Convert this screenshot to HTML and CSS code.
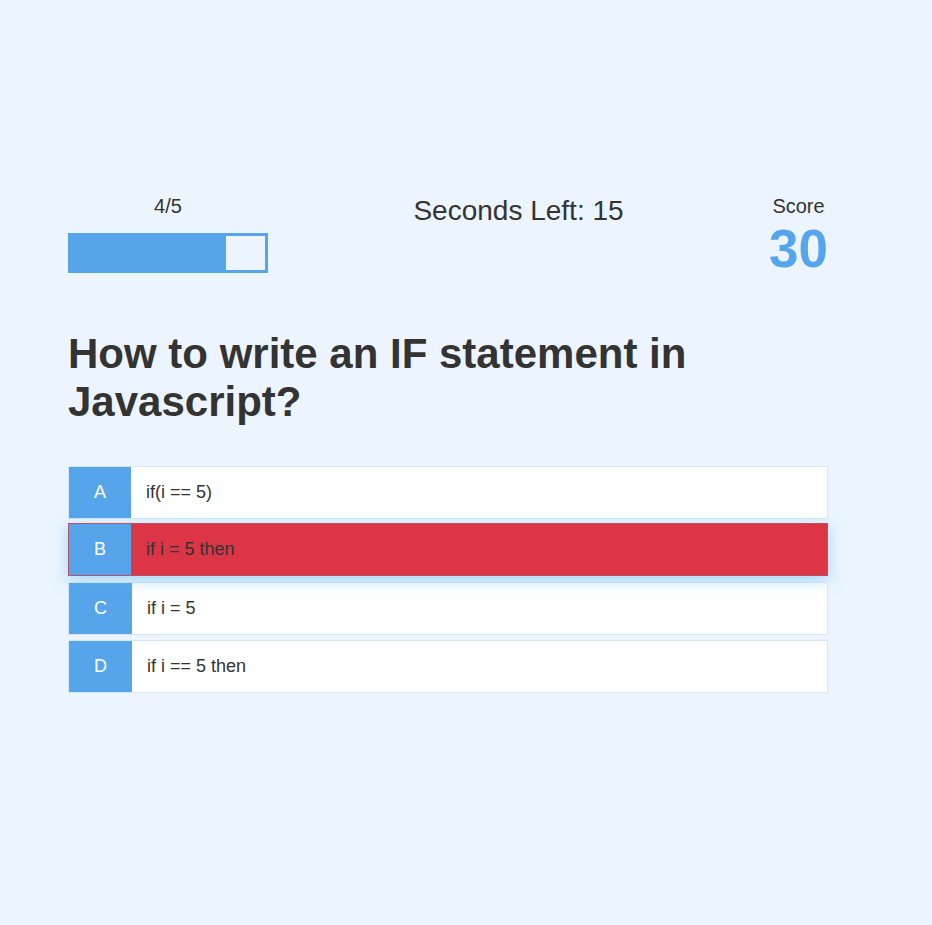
FILE: index.html
```html
<!DOCTYPE html>
<html lang="en">
<head>
<meta charset="utf-8">
<title>Quiz</title>
<link rel="stylesheet" href="styles.css">
</head>
<body>
<div class="container">
  <div class="hud">
    <div class="hud-item">
      <p class="hud-prefix">4/5</p>
      <div class="progress"><div class="progress-fill" style="width:80%"></div></div>
    </div>
    <div class="hud-item">
      <p class="hud-timer">Seconds Left: 15</p>
    </div>
    <div class="hud-item">
      <p class="hud-prefix">Score</p>
      <p class="hud-main-text">30</p>
    </div>
  </div>
  <h2 class="question">How to write an IF statement in Javascript?</h2>
  <div class="choice">
    <p class="choice-prefix">A</p>
    <p class="choice-text">if(i == 5)</p>
  </div>
  <div class="choice incorrect hover">
    <p class="choice-prefix">B</p>
    <p class="choice-text">if i = 5 then</p>
  </div>
  <div class="choice">
    <p class="choice-prefix">C</p>
    <p class="choice-text">if i = 5</p>
  </div>
  <div class="choice">
    <p class="choice-prefix">D</p>
    <p class="choice-text">if i == 5 then</p>
  </div>
</div>
</body>
</html>
```
FILE: styles.css
```css
* {
  box-sizing: border-box;
}
html, body {
  margin: 0;
  padding: 0;
}
body {
  background: #ecf5ff;
  color: #333;
  font-family: "Liberation Sans", Arial, sans-serif;
  min-height: 925px;
}
p {
  margin: 0;
}
.container {
  width: 760px;
  margin-left: 68px;
  padding-top: 195px;
}
.hud {
  display: flex;
  justify-content: space-between;
  align-items: flex-start;
  height: 87px;
}
.hud-item {
  display: flex;
  flex-direction: column;
  align-items: center;
}
.hud-prefix {
  font-size: 20px;
  text-align: center;
}
.hud-timer {
  font-size: 28px;
}
.hud-main-text {
  font-size: 53px;
  font-weight: bold;
  color: #56a5eb;
  text-align: center;
}
.progress {
  width: 200px;
  height: 40px;
  border: 3px solid #56a5eb;
  margin-top: 15px;
}
.progress-fill {
  height: 100%;
  background: #56a5eb;
}
.question {
  font-size: 42px;
  font-weight: bold;
  margin: 48px 0 40px;
}
.choice {
  display: flex;
  margin-bottom: 5px;
  border: 1px solid rgba(86, 165, 235, 0.25);
  background: #fff;
  font-size: 18px;
}
.choice-prefix {
  padding: 15px 25px;
  background: #56a5eb;
  color: #fff;
}
.choice-text {
  padding: 15px;
  flex: 1;
}
.choice.incorrect {
  background: #dc3545;
}
.choice.hover {
  box-shadow: 0 4px 14px 0 rgba(86, 185, 235, 0.5);
  transform: translateY(-1px);
}
```
